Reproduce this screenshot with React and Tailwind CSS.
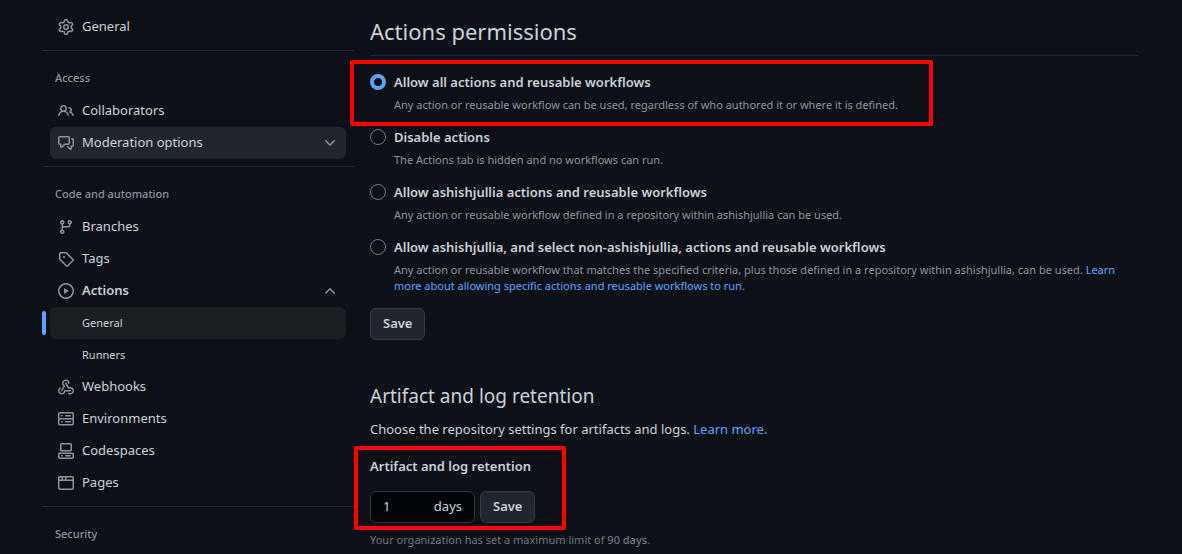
import { useState } from "react";

const ICONS = {
  gear: "M8 0a8.2 8.2 0 0 1 .701.031C9.444.095 9.99.645 10.16 1.29l.288 1.107c.018.066.079.158.212.224.231.114.454.243.668.386.123.082.233.09.299.071l1.103-.303c.644-.176 1.392.021 1.82.63.27.385.506.792.704 1.218.315.675.111 1.422-.364 1.891l-.814.806c-.049.048-.098.147-.088.294.016.257.016.515 0 .772-.01.147.038.246.088.294l.814.806c.475.469.679 1.216.364 1.891a7.977 7.977 0 0 1-.704 1.217c-.428.61-1.176.807-1.82.63l-1.102-.302c-.067-.019-.177-.011-.3.071a5.909 5.909 0 0 1-.668.386c-.133.066-.194.158-.211.224l-.29 1.106c-.168.646-.715 1.196-1.458 1.26a8.006 8.006 0 0 1-1.402 0c-.743-.064-1.289-.614-1.458-1.26l-.289-1.106c-.018-.066-.079-.158-.212-.224a5.738 5.738 0 0 1-.668-.386c-.123-.082-.233-.09-.299-.071l-1.103.303c-.644.176-1.392-.021-1.82-.63a8.12 8.12 0 0 1-.704-1.218c-.315-.675-.111-1.422.363-1.891l.815-.806c.05-.048.098-.147.088-.294a6.214 6.214 0 0 1 0-.772c.01-.147-.038-.246-.088-.294l-.815-.806C.635 6.045.431 5.298.746 4.623a7.92 7.92 0 0 1 .704-1.217c.428-.61 1.176-.807 1.82-.63l1.102.302c.067.019.177.011.3-.071.214-.143.437-.272.668-.386.133-.066.194-.158.211-.224l.29-1.106C6.009.645 6.556.095 7.299.03 7.53.01 7.764 0 8 0Zm-.571 1.525c-.036.003-.108.036-.137.146l-.289 1.105c-.147.561-.549.967-.998 1.189-.173.086-.34.183-.5.29-.417.278-.97.423-1.529.27l-1.103-.303c-.109-.03-.175.016-.195.045-.22.312-.412.644-.573.99-.014.031-.021.11.059.19l.815.806c.411.406.562.957.53 1.456a4.709 4.709 0 0 0 0 .582c.032.499-.119 1.05-.53 1.456l-.815.806c-.081.08-.073.159-.059.19.162.346.353.677.573.989.02.03.085.076.195.046l1.102-.303c.56-.153 1.113-.008 1.53.27.161.107.328.204.501.29.447.222.85.629.997 1.189l.289 1.105c.029.109.101.143.137.146a6.6 6.6 0 0 0 1.142 0c.036-.003.108-.036.137-.146l.289-1.105c.147-.561.549-.967.998-1.189.173-.086.34-.183.5-.29.417-.278.97-.423 1.529-.27l1.103.303c.109.029.175-.016.195-.045.22-.313.411-.644.573-.99.014-.031.021-.11-.059-.19l-.815-.806c-.411-.406-.562-.957-.53-1.456a4.709 4.709 0 0 0 0-.582c-.032-.499.119-1.05.53-1.456l.815-.806c.081-.08.073-.159.059-.19a6.464 6.464 0 0 0-.573-.989c-.02-.03-.085-.076-.195-.046l-1.102.303c-.56.153-1.113.008-1.53-.27a4.44 4.44 0 0 0-.501-.29c-.447-.222-.85-.629-.997-1.189l-.289-1.105c-.029-.11-.101-.143-.137-.146a6.6 6.6 0 0 0-1.142 0ZM11 8a3 3 0 1 1-6 0 3 3 0 0 1 6 0ZM9.5 8a1.5 1.5 0 1 0-3.001.001A1.5 1.5 0 0 0 9.5 8Z",
  people:
    "M2 5.5a3.5 3.5 0 1 1 5.898 2.549 5.508 5.508 0 0 1 3.034 4.084.75.75 0 1 1-1.482.235 4 4 0 0 0-7.9 0 .75.75 0 0 1-1.482-.236A5.507 5.507 0 0 1 3.102 8.05 3.493 3.493 0 0 1 2 5.5ZM11 4a3.001 3.001 0 0 1 2.22 5.018 5.01 5.01 0 0 1 2.56 3.012.749.749 0 0 1-.885.954.752.752 0 0 1-.549-.514 3.507 3.507 0 0 0-2.522-2.372.75.75 0 0 1-.574-.73v-.352a.75.75 0 0 1 .416-.672A1.5 1.5 0 0 0 11 5.5.75.75 0 0 1 11 4Zm-5.5-.5a2 2 0 1 0-.001 3.999A2 2 0 0 0 5.5 3.5Z",
  discussion:
    "M1.75 1h8.5c.966 0 1.75.784 1.75 1.75v5.5A1.75 1.75 0 0 1 10.25 10H7.061l-2.574 2.573A1.458 1.458 0 0 1 2 11.543V10h-.25A1.75 1.75 0 0 1 0 8.25v-5.5C0 1.784.784 1 1.75 1ZM1.5 2.75v5.5c0 .138.112.25.25.25h1a.75.75 0 0 1 .75.75v2.19l2.72-2.72a.749.749 0 0 1 .53-.22h3.5a.25.25 0 0 0 .25-.25v-5.5a.25.25 0 0 0-.25-.25h-8.5a.25.25 0 0 0-.25.25Zm13 2a.25.25 0 0 0-.25-.25h-.5a.75.75 0 0 1 0-1.5h.5c.966 0 1.75.784 1.75 1.75v5.5A1.75 1.75 0 0 1 14.25 12H14v1.543a1.458 1.458 0 0 1-2.487 1.03L9.22 12.28a.749.749 0 0 1 .326-1.275.749.749 0 0 1 .734.215l2.22 2.22v-2.19a.75.75 0 0 1 .75-.75h1a.25.25 0 0 0 .25-.25Z",
  branch:
    "M9.5 3.25a2.25 2.25 0 1 1 3 2.122V6A2.5 2.5 0 0 1 10 8.5H6a1 1 0 0 0-1 1v1.128a2.251 2.251 0 1 1-1.5 0V5.372a2.25 2.25 0 1 1 1.5 0v1.836A2.493 2.493 0 0 1 6 7h4a1 1 0 0 0 1-1v-.628A2.25 2.25 0 0 1 9.5 3.25Zm-6 0a.75.75 0 1 0 1.5 0 .75.75 0 0 0-1.5 0Zm8.25-.75a.75.75 0 1 0 0 1.5.75.75 0 0 0 0-1.5ZM4.25 12a.75.75 0 1 0 0 1.5.75.75 0 0 0 0-1.5Z",
  tag: "M1 7.775V2.75C1 1.784 1.784 1 2.75 1h5.025c.464 0 .91.184 1.238.513l6.25 6.25a1.75 1.75 0 0 1 0 2.474l-5.026 5.026a1.75 1.75 0 0 1-2.474 0l-6.25-6.25A1.752 1.752 0 0 1 1 7.775Zm1.5 0c0 .066.026.13.073.177l6.25 6.25a.25.25 0 0 0 .354 0l5.025-5.025a.25.25 0 0 0 0-.354l-6.25-6.25a.25.25 0 0 0-.177-.073H2.75a.25.25 0 0 0-.25.25ZM6 5a1 1 0 1 1 0 2 1 1 0 0 1 0-2Z",
  play: "M8 0a8 8 0 1 1 0 16A8 8 0 0 1 8 0ZM1.5 8a6.5 6.5 0 1 0 13 0 6.5 6.5 0 0 0-13 0Zm4.879-2.773 4.264 2.559a.25.25 0 0 1 0 .428l-4.264 2.559A.25.25 0 0 1 6 10.559V5.442a.25.25 0 0 1 .379-.215Z",
  webhook:
    "M5.5 4.25a2.25 2.25 0 0 1 4.5 0 .75.75 0 0 0 1.5 0 3.75 3.75 0 1 0-6.14 2.889l-2.272 4.258a.75.75 0 0 0 1.324.706L7 7.25a.75.75 0 0 0-.309-1.015A2.25 2.25 0 0 1 5.5 4.25ZM7.364 3.607a.75.75 0 0 1 1.03.257l2.608 4.349a3.75 3.75 0 1 1-.628 6.785.75.75 0 0 1 .752-1.299 2.25 2.25 0 1 0-.033-3.88.75.75 0 0 1-1.03-.256L7.107 4.636a.75.75 0 0 1 .257-1.03ZM2.9 8.776A.75.75 0 0 1 2.625 9.8 2.25 2.25 0 1 0 6 11.75a.75.75 0 0 1 .75-.751h5.5a.75.75 0 0 1 0 1.5H7.425a3.751 3.751 0 1 1-5.55-3.998.75.75 0 0 1 1.024.274Z",
  server:
    "M1.75 1h12.5c.966 0 1.75.784 1.75 1.75v4c0 .372-.116.717-.314 1 .198.283.314.628.314 1v4a1.75 1.75 0 0 1-1.75 1.75H1.75A1.75 1.75 0 0 1 0 12.75v-4c0-.358.109-.707.314-1a1.739 1.739 0 0 1-.314-1v-4C0 1.784.784 1 1.75 1ZM1.5 2.75v4c0 .138.112.25.25.25h12.5a.25.25 0 0 0 .25-.25v-4a.25.25 0 0 0-.25-.25H1.75a.25.25 0 0 0-.25.25Zm.25 5.75a.25.25 0 0 0-.25.25v4c0 .138.112.25.25.25h12.5a.25.25 0 0 0 .25-.25v-4a.25.25 0 0 0-.25-.25ZM7 4.75A.75.75 0 0 1 7.75 4h4.5a.75.75 0 0 1 0 1.5h-4.5A.75.75 0 0 1 7 4.75ZM7.75 10h4.5a.75.75 0 0 1 0 1.5h-4.5a.75.75 0 0 1 0-1.5ZM3 4.75A.75.75 0 0 1 3.75 4h.5a.75.75 0 0 1 0 1.5h-.5A.75.75 0 0 1 3 4.75ZM3.75 10h.5a.75.75 0 0 1 0 1.5h-.5a.75.75 0 0 1 0-1.5Z",
  codespaces:
    "M0 11.25c0-.966.784-1.75 1.75-1.75h12.5c.966 0 1.75.784 1.75 1.75v3A1.75 1.75 0 0 1 14.25 16H1.75A1.75 1.75 0 0 1 0 14.25Zm2-9.5C2 .784 2.784 0 3.75 0h8.5C13.216 0 14 .784 14 1.75v5a1.75 1.75 0 0 1-1.75 1.75h-8.5A1.75 1.75 0 0 1 2 6.75Zm1.75-.25a.25.25 0 0 0-.25.25v5c0 .138.112.25.25.25h8.5a.25.25 0 0 0 .25-.25v-5a.25.25 0 0 0-.25-.25Zm-2 9.5a.25.25 0 0 0-.25.25v3c0 .138.112.25.25.25h12.5a.25.25 0 0 0 .25-.25v-3a.25.25 0 0 0-.25-.25ZM7 12.75a.75.75 0 0 1 .75-.75h4.5a.75.75 0 0 1 0 1.5h-4.5a.75.75 0 0 1-.75-.75Zm-4 0a.75.75 0 0 1 .75-.75h.5a.75.75 0 0 1 0 1.5h-.5a.75.75 0 0 1-.75-.75Z",
  browser:
    "M0 2.75C0 1.784.784 1 1.75 1h12.5c.966 0 1.75.784 1.75 1.75v10.5A1.75 1.75 0 0 1 14.25 15H1.75A1.75 1.75 0 0 1 0 13.25ZM14.5 6h-13v7.25c0 .138.112.25.25.25h12.5a.25.25 0 0 0 .25-.25Zm-6-3.5v2h6V2.75a.25.25 0 0 0-.25-.25ZM5 2.5v2h2v-2Zm-3.25 0a.25.25 0 0 0-.25.25V4.5h2v-2Z",
  chevronDown:
    "M12.78 5.22a.749.749 0 0 1 0 1.06l-4.25 4.25a.749.749 0 0 1-1.06 0L3.22 6.28a.749.749 0 1 1 1.06-1.06L8 8.939l3.72-3.719a.749.749 0 0 1 1.06 0Z",
  chevronUp:
    "M3.22 10.53a.749.749 0 0 1 0-1.06l4.25-4.25a.749.749 0 0 1 1.06 0l4.25 4.25a.749.749 0 1 1-1.06 1.06L8 6.811 4.28 10.53a.749.749 0 0 1-1.06 0Z",
};

function Icon({ name }) {
  return (
    <svg viewBox="0 0 16 16" aria-hidden="true" className="size-4 shrink-0 fill-[#8b949e]">
      <path d={ICONS[name]} />
    </svg>
  );
}

function NavLink({ icon, children }) {
  return (
    <li>
      <a href="#" className="flex h-8 items-center gap-2 rounded-md px-2 text-[13px]">
        <Icon name={icon} />
        {children}
      </a>
    </li>
  );
}

function NavToggle({ icon, open, className, children }) {
  return (
    <button
      type="button"
      aria-expanded={open}
      className={`flex h-8 w-full items-center gap-2 rounded-md px-2 text-left text-[13px] ${className}`}
    >
      <Icon name={icon} />
      <span className="flex-1">{children}</span>
      <Icon name={open ? "chevronUp" : "chevronDown"} />
    </button>
  );
}

function NavSection({ title, children }) {
  return (
    <section className="mt-[7px] border-t border-[#21262d]">
      <h3 className="px-[13px] pt-[18px] pb-2 text-[11px]/[18px] font-medium text-[#8b949e]">{title}</h3>
      {children && <ul className="px-2">{children}</ul>}
    </section>
  );
}

function Sidebar() {
  return (
    <nav aria-label="Repository settings" className="w-[312px] shrink-0 pt-[11px]">
      <ul className="px-2">
        <NavLink icon="gear">General</NavLink>
      </ul>
      <NavSection title="Access">
        <NavLink icon="people">Collaborators</NavLink>
        <li>
          <NavToggle icon="discussion" open={false} className="bg-[#21262d]">
            Moderation options
          </NavToggle>
        </li>
      </NavSection>
      <NavSection title="Code and automation">
        <NavLink icon="branch">Branches</NavLink>
        <NavLink icon="tag">Tags</NavLink>
        <li>
          <NavToggle icon="play" open className="font-semibold">
            Actions
          </NavToggle>
          <ul>
            <li className="relative">
              <span className="absolute top-1 -left-2 h-6 w-1 rounded-md bg-[#58a6ff]" />
              <a
                href="#"
                aria-current="page"
                className="flex h-8 items-center rounded-md bg-[#1b1f23] pl-8 text-[11px]"
              >
                General
              </a>
            </li>
            <li>
              <a href="#" className="flex h-8 items-center rounded-md pl-8 text-[11px]">
                Runners
              </a>
            </li>
          </ul>
        </li>
        <NavLink icon="webhook">Webhooks</NavLink>
        <NavLink icon="server">Environments</NavLink>
        <NavLink icon="codespaces">Codespaces</NavLink>
        <NavLink icon="browser">Pages</NavLink>
      </NavSection>
      <NavSection title="Security" />
    </nav>
  );
}

function Policy({ id, title, checked, onSelect, marker, children }) {
  return (
    <div className="relative flex gap-2">
      <input
        type="radio"
        name="policy"
        id={id}
        checked={checked}
        onChange={onSelect}
        aria-describedby={`${id}-note`}
        className="mt-0.5 size-4 shrink-0 appearance-none rounded-full border border-[#6e7681] checked:border-4 checked:border-[#58a6ff]"
      />
      <div>
        <label htmlFor={id} className="block text-[13px]/[21px] font-semibold">
          {title}
        </label>
        <p id={`${id}-note`} className="mt-1 text-[11px]/4 text-[#8b949e]">
          {children}
        </p>
      </div>
      {marker}
    </div>
  );
}

function SaveButton() {
  return (
    <button
      type="submit"
      className="h-8 rounded-md border border-[#363b42] bg-[#21262d] px-3 text-[13px] font-semibold"
    >
      Save
    </button>
  );
}

export default function App() {
  const [policy, setPolicy] = useState("all");
  const [days, setDays] = useState("1");
  const bind = (id) => ({ id, checked: policy === id, onSelect: () => setPolicy(id) });

  return (
    <div className="flex min-h-screen gap-4 bg-[#0d1117] pr-11 pl-[42px] font-['Noto_Sans',sans-serif] text-[#c9d1d9]">
      <Sidebar />
      <main className="min-w-0 flex-1 pt-[15px]">
        <form onSubmit={(e) => e.preventDefault()}>
          <h2 className="border-b border-[#21262d] pb-2 text-[22px]/8">Actions permissions</h2>
          <div className="mt-4 flex flex-col gap-[14px]">
            <Policy
              {...bind("all")}
              title="Allow all actions and reusable workflows"
              marker={
                <span className="pointer-events-none absolute -top-3 -left-5 h-[66px] w-[583px] rounded-xs border-4 border-[#ff0000]" />
              }
            >
              Any action or reusable workflow can be used, regardless of who authored it or where it is defined.
            </Policy>
            <Policy {...bind("disabled")} title="Disable actions">
              The Actions tab is hidden and no workflows can run.
            </Policy>
            <Policy {...bind("local")} title="Allow ashishjullia actions and reusable workflows">
              Any action or reusable workflow defined in a repository within ashishjullia can be used.
            </Policy>
            <Policy
              {...bind("selected")}
              title="Allow ashishjullia, and select non-ashishjullia, actions and reusable workflows"
            >
              Any action or reusable workflow that matches the specified criteria, plus those defined in a repository
              within ashishjullia, can be used.{" "}
              <a href="#" className="text-[#58a6ff]">
                Learn more about allowing specific actions and reusable workflows to run.
              </a>
            </Policy>
            <div className="flex">
              <SaveButton />
            </div>
          </div>
        </form>

        <form onSubmit={(e) => e.preventDefault()} className="mt-[41px]">
          <h3 className="text-[19px]/[30px]">Artifact and log retention</h3>
          <p className="mt-2 text-[13px]/[21px]">
            Choose the repository settings for artifacts and logs.{" "}
            <a href="#" className="text-[#58a6ff]">
              Learn more.
            </a>
          </p>
          <div className="relative mt-4">
            <label htmlFor="retention" className="block text-[13px]/[21px] font-semibold">
              Artifact and log retention
            </label>
            <div className="mt-[14px] flex gap-[5px]">
              <div className="flex h-8 w-[105px] items-center rounded-md border border-[#30363d] bg-[#010409] px-3 text-[13px]">
                <input
                  id="retention"
                  type="text"
                  inputMode="numeric"
                  value={days}
                  onChange={(e) => setDays(e.target.value)}
                  className="w-0 min-w-0 flex-1 bg-transparent outline-none"
                />
                <span>days</span>
              </div>
              <SaveButton />
            </div>
            <span className="pointer-events-none absolute -top-[10px] -left-4 h-[84px] w-[212px] rounded-xs border-4 border-[#ff0000]" />
          </div>
          <p className="mt-[9px] text-[11px]/4 text-[#6e7681]">
            Your organization has set a maximum limit of <strong className="font-medium">90 days</strong>.
          </p>
        </form>
      </main>
    </div>
  );
}
